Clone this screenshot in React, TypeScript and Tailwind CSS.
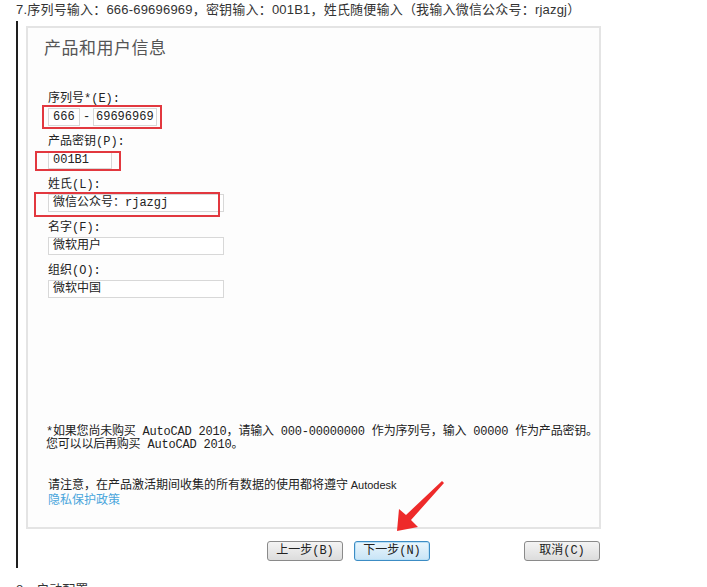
import React from "react";

const mono = "font-['Liberation_Mono','Noto_Sans_CJK_SC',monospace]";

function Field({ label, value, first }: { label: string; value: string; first?: boolean }) {
  return (
    <div className={first ? "" : "mt-[9px]"}>
      <div className="text-[12px] leading-[14px] text-[#222]">{label}</div>
      <div className="mt-[2px] flex h-[18px] w-[176px] items-center border border-[#d8d8d8] bg-white pl-[4px] text-[12px] text-[#222]">
        {value}
      </div>
    </div>
  );
}

function DlgButton({ children, primary, className = "" }: { children: React.ReactNode; primary?: boolean; className?: string }) {
  return (
    <button
      className={`flex h-[20px] w-[76px] items-center justify-center rounded-[3px] border text-[12px] text-[#222] ${mono} ${
        primary
          ? "border-[#3c8cc4] bg-gradient-to-b from-[#eaf6fd] to-[#c8e4f6] shadow-[inset_0_0_0_1px_#b9e0f7]"
          : "border-[#8a8a8a] bg-gradient-to-b from-[#f4f4f4] to-[#dcdcdc]"
      } ${className}`}
    >
      {children}
    </button>
  );
}

export default function App() {
  return (
    <div className="relative h-[587px] w-[707px] overflow-hidden bg-white font-['Liberation_Sans','Noto_Sans_CJK_SC',sans-serif]">
      <p className="whitespace-nowrap pl-[16px] pt-[2px] text-[13px] leading-[16px] tracking-[0.2px] text-[#333]">
        7.序列号输入：666-69696969，密钥输入：001B1，姓氏随便输入（我输入微信公众号：rjazgj）
      </p>

      <div className="ml-[16px] mt-[3px] h-[547px] border-l-2 border-[#1e1e1e] pl-[8px] pt-[5px]">
        <div className="h-[503px] w-[575px] border-2 border-[#e4e4e4] bg-[#fdfdfd]">
          <h2 className="pl-[16px] pt-[9px] text-[17px] font-normal leading-[20px] tracking-[0.5px] text-[#555] font-['Noto_Sans_CJK_SC',sans-serif]">
            产品和用户信息
          </h2>

          <div className={`ml-[20px] mt-[35px] ${mono}`}>
            <div>
              <div className="text-[12px] leading-[14px] text-[#222]">序列号*(E):</div>
              <div className="mt-[2px] flex items-center">
                <div className="flex h-[18px] w-[32px] items-center border border-[#d8d8d8] bg-white pl-[4px] text-[12px] text-[#222]">
                  666
                </div>
                <span className="w-[13px] text-center text-[12px] text-[#222]">-</span>
                <div className="flex h-[18px] w-[64px] items-center border border-[#d8d8d8] bg-white pl-[2px] text-[12px] text-[#222]">
                  69696969
                </div>
              </div>
            </div>
            <div className="mt-[9px]">
              <div className="text-[12px] leading-[14px] text-[#222]">产品密钥(P):</div>
              <div className="mt-[2px] flex h-[18px] w-[64px] items-center border border-[#d8d8d8] bg-white pl-[4px] text-[12px] text-[#222]">
                001B1
              </div>
            </div>
            <Field label="姓氏(L):" value="微信公众号：rjazgj" />
            <Field label="名字(F):" value="微软用户" />
            <Field label="组织(O):" value="微软中国" />
          </div>

          <div className={`ml-[18px] mt-[128px] whitespace-nowrap text-[12px] leading-[13px] tracking-[-0.2px] text-[#222] ${mono}`}>
            <p>*如果您尚未购买 AutoCAD 2010，请输入 000-00000000 作为序列号，输入 00000 作为产品密钥。</p>
            <p>您可以以后再购买 AutoCAD 2010。</p>
          </div>

          <div className="ml-[20px] mt-[25px] whitespace-nowrap text-[12px] leading-[14px]">
            <p className="text-[#222] font-['Noto_Sans_CJK_SC',sans-serif]">
              请注意，在产品激活期间收集的所有数据的使用都将遵守 <span className="text-[11px] font-['Liberation_Sans',sans-serif]">Autodesk</span>
            </p>
            <p className="text-[#4aa6dc] font-['Noto_Sans_CJK_SC',sans-serif]">隐私保护政策</p>
          </div>
        </div>

        <div className="mt-[12px] flex">
          <DlgButton className="ml-[241px]">上一步(B)</DlgButton>
          <DlgButton primary className="ml-[11px]">下一步(N)</DlgButton>
          <DlgButton className="ml-[94px]">取消(C)</DlgButton>
        </div>
      </div>

      <p className="mt-[14px] pl-[16px] text-[13px] leading-[16px] text-[#333]">8．启动配置</p>

      {/* red highlight boxes */}
      <div className="absolute left-[42px] top-[105px] h-[24px] w-[120px] border-2 border-[#e2383f]" />
      <div className="absolute left-[35px] top-[151px] h-[20px] w-[86px] border-2 border-[#e2383f]" />
      <div className="absolute left-[34px] top-[192px] h-[25px] w-[186px] border-2 border-[#e2383f]" />

      {/* red arrow */}
      <svg className="absolute left-0 top-0" width="707" height="587" viewBox="0 0 707 587">
        <polygon
          points="397,531 399,509 406,515 442,481 444,483 411,520 418,527"
          fill="#ee2a2a"
        />
      </svg>
    </div>
  );
}
